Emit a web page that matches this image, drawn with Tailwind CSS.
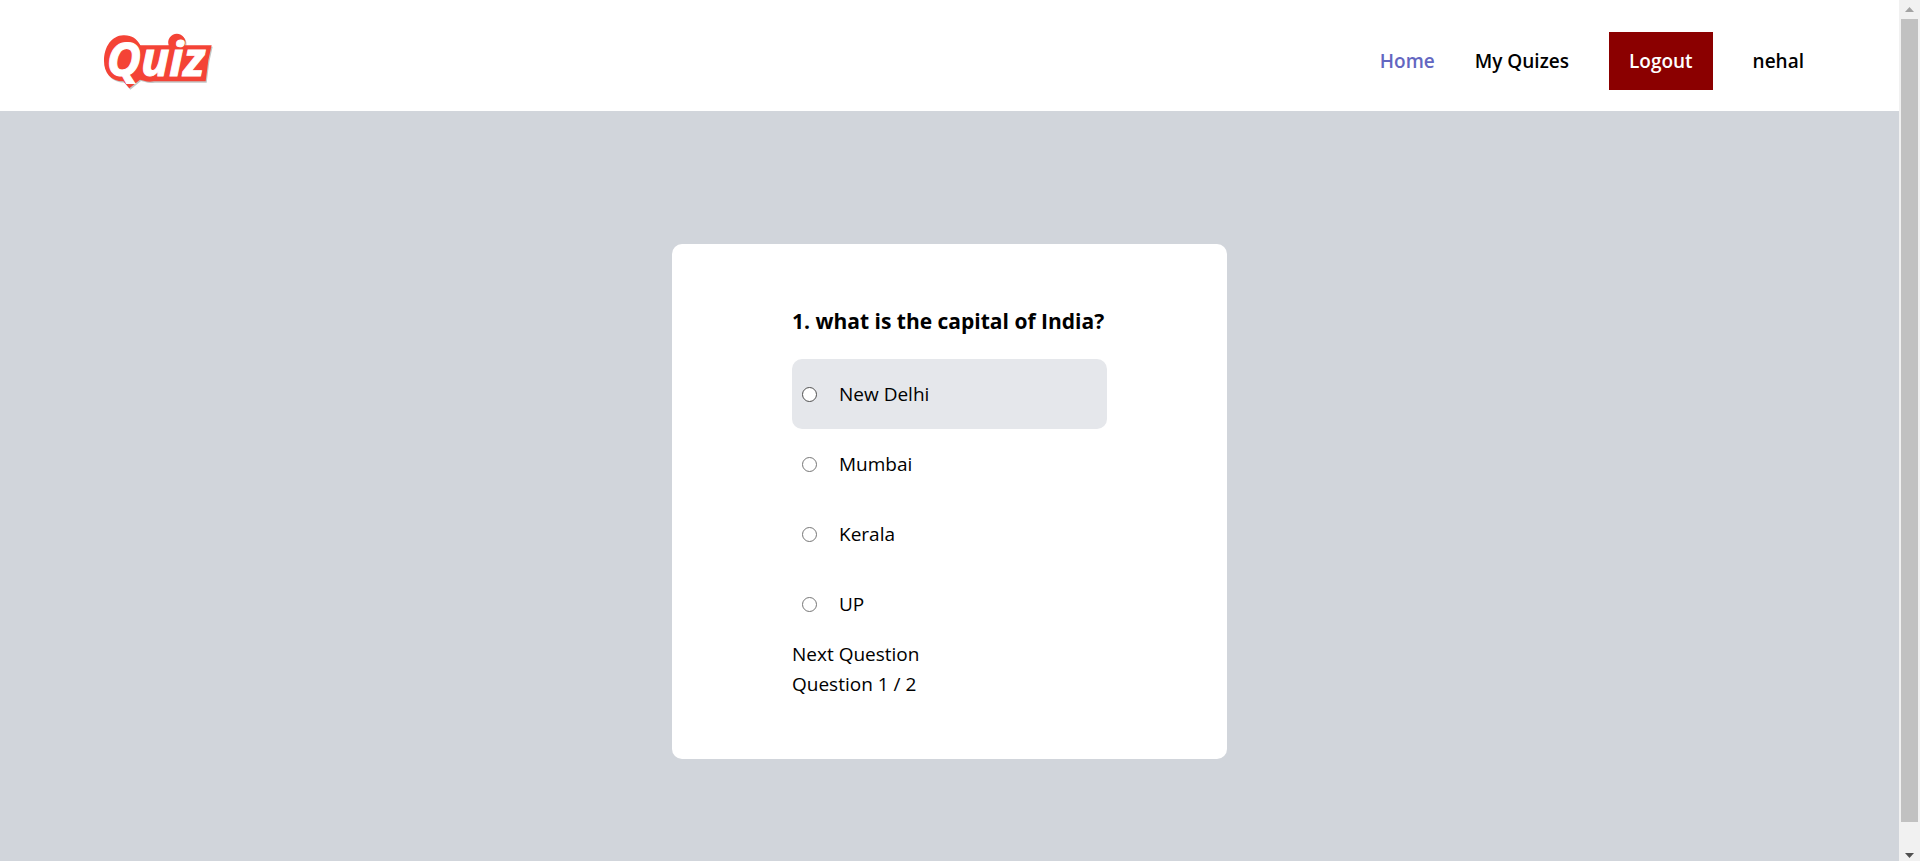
<!DOCTYPE html>
<html lang="en">
<head>
<meta charset="utf-8">
<meta name="viewport" content="width=device-width, initial-scale=1">
<title>Quiz</title>
<script src="https://cdn.jsdelivr.net/npm/@tailwindcss/browser@4"></script>
</head>
<body class="flex h-screen overflow-hidden bg-[#d1d5db] font-['Segoe_UI','Open_Sans',sans-serif] text-[19px] leading-[30px] text-black">
  <div class="flex min-w-0 flex-1 flex-col">
    <header class="flex items-center justify-between bg-white pt-8 pr-[95px] pb-[21px] pl-[104px]">
      <a href="#" aria-label="Quiz">
        <svg class="h-[57px] w-[110px] overflow-visible" viewBox="42 36 330 171">
          <path fill="#9aa0a0" opacity=".6" transform="translate(3 4)" d="M100 43C125 42 140 53 151 73H236A26 26 0 1 1 285 73H365L355 118L347 181H192Q175 184 162 179L150 176L118 202L100 181C62 181 42 154 42 120C42 77 65 44 100 43Z"/>
          <path fill="#f44336" d="M100 43C125 42 140 53 151 73H236A26 26 0 1 1 285 73H365L355 118L347 181H192Q175 184 162 179L150 176L118 202L100 181C62 181 42 154 42 120C42 77 65 44 100 43Z"/>
          <text x="50" y="164" font-size="141" fill="#fff" stroke="#fff" stroke-width="3" font-family="Open Sans, sans-serif" font-weight="700" font-style="italic">Quiz</text>
        </svg>
      </a>
      <nav class="flex items-center gap-10 font-semibold">
        <a href="#" class="text-[#6366c1]">Home</a>
        <a href="#">My Quizes</a>
        <button type="button" class="bg-[#8b0000] px-5 py-[14px] font-semibold text-white">Logout</button>
        <a href="#">nehal</a>
      </nav>
    </header>
    <main class="flex flex-1 items-start justify-center pt-[133px]">
      <form class="rounded-[10px] bg-white px-[120px] py-[60px]">
        <fieldset class="min-w-[315px]">
          <legend class="mb-5 text-[21px] leading-[35px] font-bold whitespace-nowrap">1. what is the capital of India?</legend>
          <label class="flex h-[70px] items-center gap-[22px] rounded-[10px] bg-[#e5e7eb] px-[10px]"><input type="radio" name="answer" class="size-[15px] appearance-none rounded-full border border-[#4f4f4f] bg-white">New Delhi</label>
          <label class="flex h-[70px] items-center gap-[22px] rounded-[10px] px-[10px]"><input type="radio" name="answer" class="size-[15px] appearance-none rounded-full border border-[#767676] bg-white">Mumbai</label>
          <label class="flex h-[70px] items-center gap-[22px] rounded-[10px] px-[10px]"><input type="radio" name="answer" class="size-[15px] appearance-none rounded-full border border-[#767676] bg-white">Kerala</label>
          <label class="flex h-[70px] items-center gap-[22px] rounded-[10px] px-[10px]"><input type="radio" name="answer" class="size-[15px] appearance-none rounded-full border border-[#767676] bg-white">UP</label>
        </fieldset>
        <button type="button" class="block">Next Question</button>
        <p>Question 1 / 2</p>
      </form>
    </main>
  </div>
  <div class="flex w-[21px] flex-col items-center justify-between bg-[#f1f1f1]" aria-hidden="true">
    <svg class="h-[19px] w-[9px] shrink-0" viewBox="0 0 9 19"><path fill="#a3a3a3" d="M0 12L4.500 7L9 12Z"/></svg>
    <div class="w-[17px] flex-1 bg-[#c1c1c1]"></div>
    <svg class="h-[39px] w-[9px] shrink-0" viewBox="0 0 9 39"><path fill="#505050" d="M0 31L4.500 36L9 31Z"/></svg>
  </div>
</body>
</html>
